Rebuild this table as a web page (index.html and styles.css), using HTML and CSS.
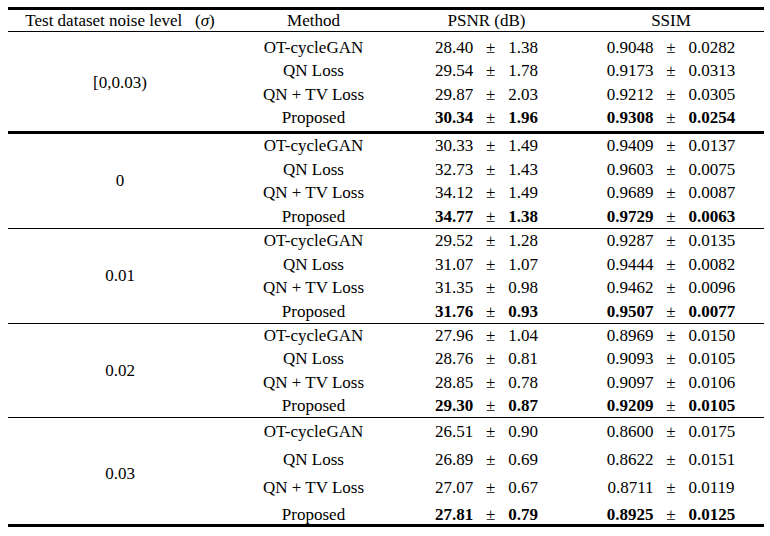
FILE: index.html
```html
<!DOCTYPE html>
<html lang="en">
<head>
<meta charset="utf-8">
<title>Noise level comparison</title>
<link rel="stylesheet" href="styles.css">
</head>
<body>
<div class="tbl">
  <div class="head">
    <div class="cell">Test dataset noise level&nbsp;&nbsp;&nbsp;(<i>σ</i>)</div>
    <div class="cell">Method</div>
    <div class="cell">PSNR (dB)</div>
    <div class="cell">SSIM</div>
  </div>

  <div class="group g1">
    <div class="cell lvl">[0,0.03)</div>
    <div class="cell">OT-cycleGAN</div><div class="cell num">28.40   ±   1.38</div><div class="cell num">0.9048   ±   0.0282</div>
    <div class="cell">QN Loss</div><div class="cell num">29.54   ±   1.78</div><div class="cell num">0.9173   ±   0.0313</div>
    <div class="cell">QN + TV Loss</div><div class="cell num">29.87   ±   2.03</div><div class="cell num">0.9212   ±   0.0305</div>
    <div class="cell">Proposed</div><div class="cell num"><b>30.34</b>   ±   <b>1.96</b></div><div class="cell num"><b>0.9308</b>   ±   <b>0.0254</b></div>
  </div>

  <div class="group g2 thick">
    <div class="cell lvl">0</div>
    <div class="cell">OT-cycleGAN</div><div class="cell num">30.33   ±   1.49</div><div class="cell num">0.9409   ±   0.0137</div>
    <div class="cell">QN Loss</div><div class="cell num">32.73   ±   1.43</div><div class="cell num">0.9603   ±   0.0075</div>
    <div class="cell">QN + TV Loss</div><div class="cell num">34.12   ±   1.49</div><div class="cell num">0.9689   ±   0.0087</div>
    <div class="cell">Proposed</div><div class="cell num"><b>34.77</b>   ±   <b>1.38</b></div><div class="cell num"><b>0.9729</b>   ±   <b>0.0063</b></div>
  </div>

  <div class="group g3">
    <div class="cell lvl">0.01</div>
    <div class="cell">OT-cycleGAN</div><div class="cell num">29.52   ±   1.28</div><div class="cell num">0.9287   ±   0.0135</div>
    <div class="cell">QN Loss</div><div class="cell num">31.07   ±   1.07</div><div class="cell num">0.9444   ±   0.0082</div>
    <div class="cell">QN + TV Loss</div><div class="cell num">31.35   ±   0.98</div><div class="cell num">0.9462   ±   0.0096</div>
    <div class="cell">Proposed</div><div class="cell num"><b>31.76</b>   ±   <b>0.93</b></div><div class="cell num"><b>0.9507</b>   ±   <b>0.0077</b></div>
  </div>

  <div class="group g4">
    <div class="cell lvl">0.02</div>
    <div class="cell">OT-cycleGAN</div><div class="cell num">27.96   ±   1.04</div><div class="cell num">0.8969   ±   0.0150</div>
    <div class="cell">QN Loss</div><div class="cell num">28.76   ±   0.81</div><div class="cell num">0.9093   ±   0.0105</div>
    <div class="cell">QN + TV Loss</div><div class="cell num">28.85   ±   0.78</div><div class="cell num">0.9097   ±   0.0106</div>
    <div class="cell">Proposed</div><div class="cell num"><b>29.30</b>   ±   <b>0.87</b></div><div class="cell num"><b>0.9209</b>   ±   <b>0.0105</b></div>
  </div>

  <div class="group g5">
    <div class="cell lvl">0.03</div>
    <div class="cell">OT-cycleGAN</div><div class="cell num">26.51   ±   0.90</div><div class="cell num">0.8600   ±   0.0175</div>
    <div class="cell">QN Loss</div><div class="cell num">26.89   ±   0.69</div><div class="cell num">0.8622   ±   0.0151</div>
    <div class="cell">QN + TV Loss</div><div class="cell num">27.07   ±   0.67</div><div class="cell num">0.8711   ±   0.0119</div>
    <div class="cell">Proposed</div><div class="cell num"><b>27.81</b>   ±   <b>0.79</b></div><div class="cell num"><b>0.8925</b>   ±   <b>0.0125</b></div>
  </div>
</div>
</body>
</html>
```

FILE: styles.css
```css
html, body {
  margin: 0;
  padding: 0;
  background: #ffffff;
}

body {
  padding: 7px 0 0 8px;
  font-family: "Liberation Serif", "Times New Roman", serif;
  font-size: 17px;
  color: #000000;
}

.tbl {
  width: 756px;
  border-top: 3px solid #000;
  border-bottom: 3px solid #000;
}

.head,
.group {
  display: grid;
  grid-template-columns: 224px 163px 183px 186px;
  box-sizing: border-box;
}

.head {
  height: 22px;
  line-height: 21px;
  border-bottom: 1px solid #000;
}

.cell {
  text-align: center;
  white-space: pre;
}

.head .cell {
  white-space: normal;
}

.cell b {
  font-weight: bold;
}

.group {
  --pitch: 23.5px;
  --pt: 0px;
  --h: 94px;
  height: var(--h);
  padding-top: var(--pt);
  grid-template-rows: repeat(4, var(--pitch));
  line-height: var(--pitch);
  border-top: 1px solid #000;
}

.group.thick {
  border-top: 3px solid #000;
}

.g1 {
  --pitch: 23.5px;
  --pt: 3.5px;
  --h: 99px;
  border-top: none;
}

.g2 { --h: 97px; }
.g3 { --h: 95px; }
.g4 { --h: 94px; --pitch: 23.25px; }
.g5 { --h: 107px; --pitch: 27.8px; }

.lvl {
  grid-column: 1;
  grid-row: 1 / span 4;
  align-self: center;
}
```
